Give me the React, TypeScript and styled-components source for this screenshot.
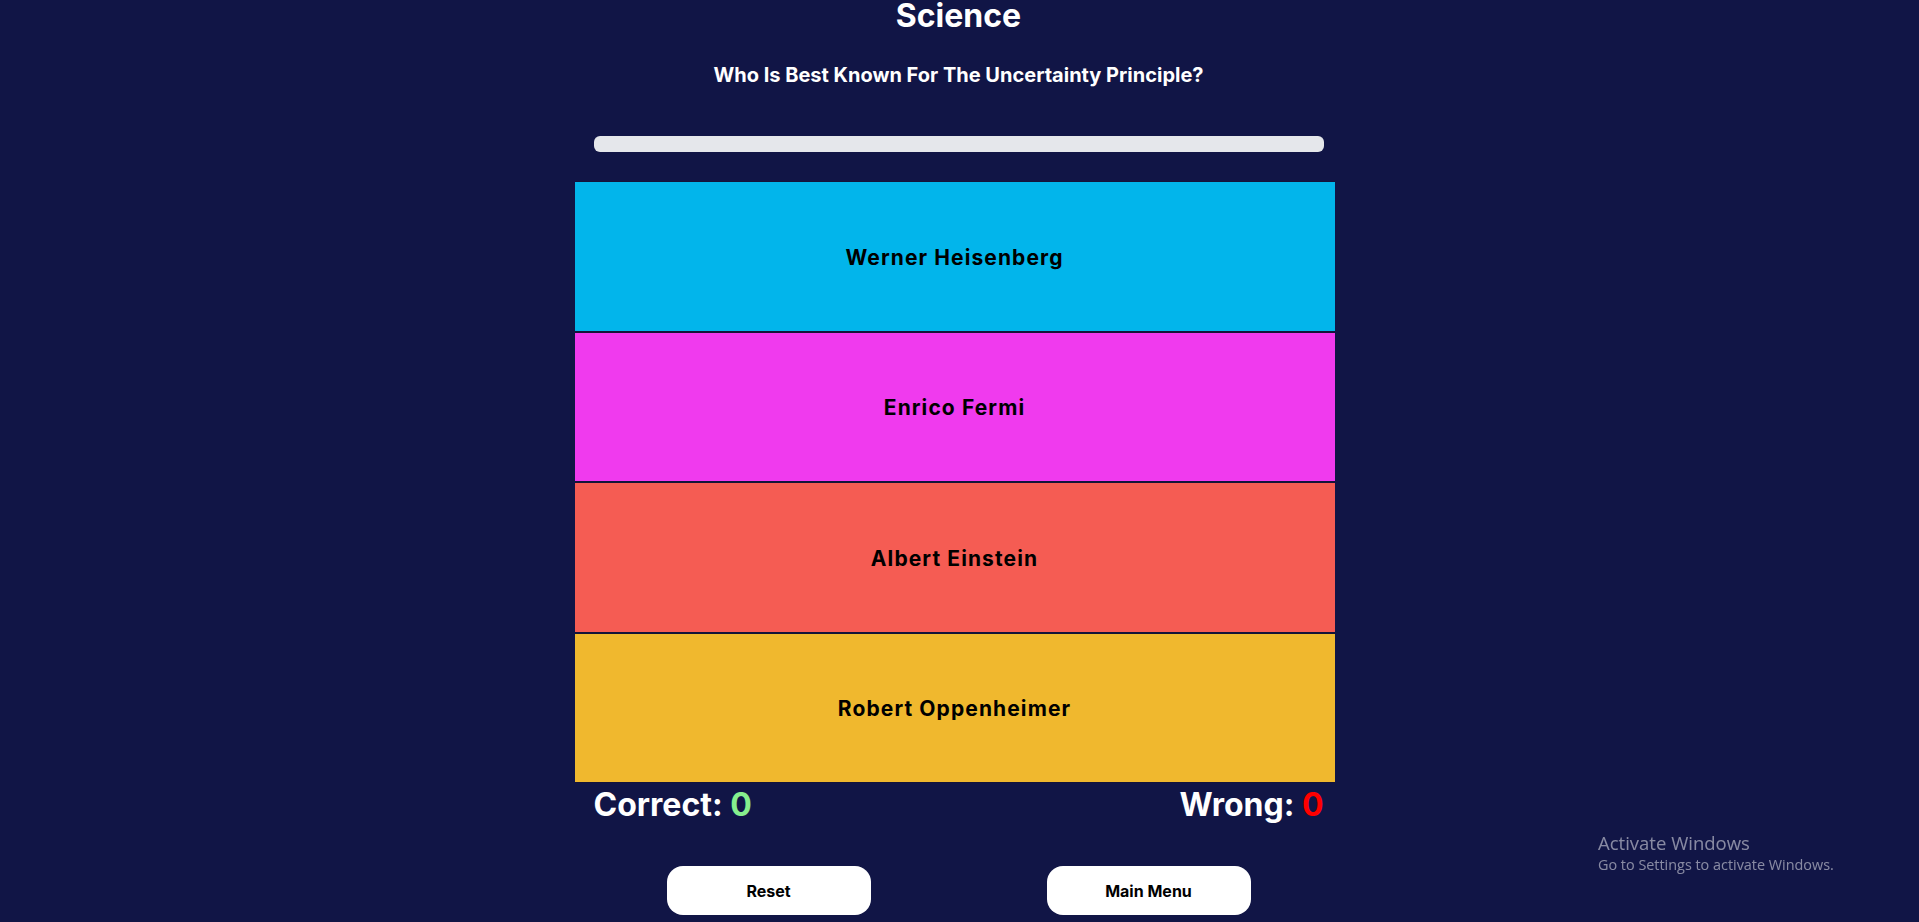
import React from "react";
import styled, { createGlobalStyle } from "styled-components";

const GlobalStyle = createGlobalStyle`
  html, body {
    margin: 0;
    padding: 0;
    background: #111546;
    font-family: Inter, "Liberation Sans", sans-serif;
  }
  * { box-sizing: border-box; }
`;

const Page = styled.main`
  min-height: 922px;
  padding-right: 2px;
  background: #111546;
  color: #ffffff;
  display: flex;
  flex-direction: column;
  align-items: center;
`;

const Column = styled.div`
  width: 730px;
  display: flex;
  flex-direction: column;
  align-items: stretch;
`;

const Title = styled.h1`
  margin: 0;
  font-size: 32px;
  line-height: 32px;
  font-weight: 700;
  text-align: center;
`;

const Question = styled.h2`
  margin: 32px 0 0;
  font-size: 20px;
  line-height: 23px;
  font-weight: 700;
  text-align: center;
`;

const ProgressTrack = styled.div`
  margin-top: 49px;
  height: 16px;
  border-radius: 6px;
  background: #e5e7eb;
  overflow: hidden;
`;

const ProgressFill = styled.div`
  height: 100%;
  background: #e5e7eb;
`;

const Options = styled.div`
  margin: 29px -11px 0 -19px;
  display: flex;
  flex-direction: column;
`;

const Option = styled.button<{ $bg: string }>`
  height: 150.5px;
  width: 100%;
  border: 1px solid #14143a;
  border-left: none;
  border-right: none;
  background: ${(p) => p.$bg};
  color: #000;
  font-family: Inter, "Liberation Sans", sans-serif;
  font-size: 21px;
  font-weight: 700;
  letter-spacing: 1.1px;
  cursor: pointer;
  display: flex;
  align-items: center;
  justify-content: center;
  padding: 2px 0 0;
`;

const ScoreRow = styled.div`
  margin-top: 3px;
  display: flex;
  justify-content: space-between;
  font-size: 32px;
  line-height: 38px;
  font-weight: 700;
`;

const Score = styled.span``;

const Count = styled.span<{ $color: string }>`
  color: ${(p) => p.$color};
`;

const Buttons = styled.div`
  margin-top: 42px;
  padding: 0 73px;
  display: flex;
  justify-content: space-between;
`;

const ActionButton = styled.button`
  width: 204px;
  height: 49px;
  border: none;
  border-radius: 16px;
  background: #ffffff;
  color: #000;
  font-family: Inter, "Liberation Sans", sans-serif;
  font-size: 16px;
  font-weight: 700;
  cursor: pointer;
`;

const Watermark = styled.div`
  position: fixed;
  left: 1598px;
  top: 831px;
  color: rgba(255, 255, 255, 0.5);
  font-family: "Open Sans", "Noto Sans", sans-serif;
  pointer-events: none;
`;

const WatermarkTitle = styled.div`
  font-size: 18.5px;
  line-height: 24px;
`;

const WatermarkText = styled.div`
  font-size: 14.4px;
  line-height: 19px;
`;

const answers = [
  { label: "Werner Heisenberg", color: "#02b5eb" },
  { label: "Enrico Fermi", color: "#f03aee" },
  { label: "Albert Einstein", color: "#f55c53" },
  { label: "Robert Oppenheimer", color: "#f0b82e" },
];

export default function App() {
  const progress = 100;
  return (
    <>
      <GlobalStyle />
      <Page>
        <Column>
          <Title>Science</Title>
          <Question>Who Is Best Known For The Uncertainty Principle?</Question>
          <ProgressTrack>
            <ProgressFill style={{ width: `${progress}%` }} />
          </ProgressTrack>
          <Options>
            {answers.map((a) => (
              <Option key={a.label} $bg={a.color}>
                {a.label}
              </Option>
            ))}
          </Options>
          <ScoreRow>
            <Score>
              Correct: <Count $color="#86ef8e">0</Count>
            </Score>
            <Score>
              Wrong: <Count $color="#ff0000">0</Count>
            </Score>
          </ScoreRow>
          <Buttons>
            <ActionButton>Reset</ActionButton>
            <ActionButton>Main Menu</ActionButton>
          </Buttons>
        </Column>
        <Watermark>
          <WatermarkTitle>Activate Windows</WatermarkTitle>
          <WatermarkText>Go to Settings to activate Windows.</WatermarkText>
        </Watermark>
      </Page>
    </>
  );
}
